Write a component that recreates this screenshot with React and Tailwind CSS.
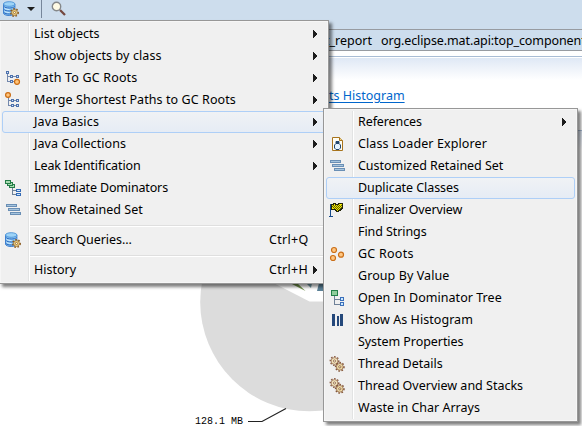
import React from 'react';

const FONT = "font-['Noto_Sans','Noto_Sans_CJK_SC',sans-serif]";

function Svg({ children, w = 16, h = 16, className = '', crisp = false }) {
  return (
    <svg
      width={w}
      height={h}
      viewBox={`0 0 ${w} ${h}`}
      shapeRendering={crisp ? 'crispEdges' : 'auto'}
      className={`block shrink-0 ${className}`}
    >
      {children}
    </svg>
  );
}

function GearRing({ cx, cy, r = 4, fill = '#f8dc8c', stroke = '#8a5a20' }) {
  return (
    <g>
      <circle cx={cx} cy={cy} r={r} fill="none" stroke={stroke} strokeWidth="1.5" strokeDasharray="1.6 1.54" />
      <circle cx={cx} cy={cy} r={r - 0.8} fill={fill} stroke={stroke} strokeWidth="0.7" />
      <circle cx={cx} cy={cy} r="1.1" fill="#fffbe8" stroke={stroke} strokeWidth="0.8" />
    </g>
  );
}

function DatabaseIcon() {
  return (
    <Svg>
      <path d="M0.5 3v9c0 1.5 2.6 2.5 5.700 2.500s5.700-1 5.700-2.500V3z" fill="#8cc6f2" stroke="#3f80cf" />
      <path d="M1 5.500c1.500 2 9 2 10.500 0M1 8.500c1.500 2 9 2 10.500 0M1 11.500c1.500 2 9 2 10.500 0" fill="none" stroke="#2a68c0" strokeWidth="1" />
      <path d="M1.500 7c1 1.200 3 1.500 5 1.500M1.500 10c1 1.200 3 1.500 5 1.500" fill="none" stroke="#d6efff" strokeWidth="0.900" />
      <ellipse cx="6.200" cy="3" rx="5.700" ry="2.300" fill="#9dd3f7" stroke="#4a92d6" strokeWidth="0.900" />
      <GearRing cx={11.5} cy={11.5} r={3.7} />
    </Svg>
  );
}

function PathIcon() {
  return (
    <Svg crisp>
      <path d="M2.500 3v8.500H6M2.500 6.500H5M8 6.500h3" fill="none" stroke="#7388ad" />
      <path d="M1.500 1.500h2v2h-2zM5.500 5.500h2v2h-2zM11.500 5.500h2v2h-2zM5.500 10.500h2v2h-2z" fill="#d5e3f5" stroke="#4e72ad" />
      <path d="M8 11.500h2" stroke="#7388ad" />
      <circle cx="12" cy="11.800" r="2.500" fill="#ffc57b" stroke="#cb6c13" strokeWidth="1.200" shapeRendering="auto" />
    </Svg>
  );
}

function MergeIcon() {
  return (
    <Svg crisp>
      <path d="M3.500 5v8.500H7M3.500 8.500H7M9 8.500h3M9 13.500h3" fill="none" stroke="#7388ad" />
      <path d="M6.500 7.500h2v2h-2zM11.500 7.500h2v2h-2zM6.500 12.500h2v2h-2zM11.500 12.500h2v2h-2z" fill="#d5e3f5" stroke="#4e72ad" />
      <circle cx="3" cy="3" r="2.400" fill="#ffc57b" stroke="#cb6c13" strokeWidth="1.200" shapeRendering="auto" />
    </Svg>
  );
}

function DominatorsIcon() {
  return (
    <Svg crisp>
      <g fill="#a9dcb2" stroke="#247d48">
        <path d="M4.500 4.500h5v3h-5z" />
        <path d="M2.500 2.500h5v3h-5z" />
        <path d="M0.500 0.500h5v3h-5z" />
      </g>
      <path d="M7.500 8v6.500H11M7.500 10.500H11" fill="none" stroke="#6f8198" />
      <path d="M11.500 9.500h4v2h-4zM11.500 13.500h4v2h-4z" fill="#cce7ff" stroke="#356bb6" />
    </Svg>
  );
}

function RetainedIcon() {
  return (
    <Svg crisp>
      <path d="M1.500 2.500h10v2h-10zM3.500 6.500h11v2h-11zM5.500 10.500h10v2h-10z" fill="#a5c4de" stroke="#6a8fb5" />
    </Svg>
  );
}

function LoaderIcon() {
  return (
    <Svg>
      <path d="M3.500 1.500h7l3 3v10h-10z" fill="#fffdf3" stroke="#a8741d" />
      <path d="M10.500 1.500v3h3" fill="#ecd28e" stroke="#a8741d" />
      <path d="M7 5.500h3v2l1.500 1.500v3L10 13.500H7L5.500 12V9L7 7.500z" fill="#e6f4ff" stroke="#23476f" />
      <path d="M7 5h3v3H7z" fill="#23476f" />
    </Svg>
  );
}

function FlagIcon() {
  return (
    <Svg crisp>
      <path d="M1.500 2v13M0 14.500h4" stroke="#16498b" fill="none" />
      <path d="M2.500 2.500h2v-1h2v1h3v-1h4v5h-1v1h-1v1h-2v1h-2v-1h-1v-1h-4z" fill="#f5eb00" stroke="#24250a" />
      <path
        d="M4 3h1v1H4zM6 3h1v1H6zM8 3h1v1H8zM10 3h1v1h-1zM12 3h1v1h-1zM3 4h1v1H3zM5 4h1v1H5zM7 4h1v1H7zM9 4h1v1H9zM11 4h1v1h-1zM4 5h1v1H4zM6 5h1v1H6zM8 5h1v1H8zM10 5h1v1h-1zM12 5h1v1h-1zM5 6h1v1H5zM7 6h1v1H7zM9 6h1v1H9zM11 6h1v1h-1zM8 7h1v1H8zM10 7h1v1h-1z"
        fill="#5c5a08"
      />
    </Svg>
  );
}

function RootsIcon() {
  return (
    <Svg>
      <g fill="#ffc681" stroke="#ca6e17" strokeWidth="1.200">
        <circle cx="5" cy="4" r="2.500" />
        <circle cx="4" cy="12" r="2.500" />
        <circle cx="12" cy="8.700" r="2.500" />
      </g>
    </Svg>
  );
}

function TreeIcon() {
  return (
    <Svg crisp>
      <path d="M5.500 6v8.500H11M5.500 9.500H11" fill="none" stroke="#6f8198" />
      <path d="M2.500 0.500h6v5h-6z" fill="#8fce9b" stroke="#23804a" />
      <path d="M11.500 7.500h3v3h-3zM11.500 12.500h3v3h-3z" fill="#c9e8ff" stroke="#3b6fba" />
    </Svg>
  );
}

function HistogramIcon() {
  return (
    <Svg crisp>
      <path d="M3 2h3v12H3zM8 4h2v10H8zM11 2h3v12h-3z" fill="#25487b" />
    </Svg>
  );
}

function ThreadsIcon() {
  return (
    <Svg>
      <GearRing cx={5.5} cy={5} r={4.2} fill="#f0e2ba" stroke="#8c6047" />
      <GearRing cx={10.8} cy={10.8} r={4.2} fill="#ecd9a5" stroke="#855739" />
    </Svg>
  );
}

function Arrow() {
  return (
    <Svg w={4} h={8} crisp>
      <path d="M0 0l4 4-4 4z" fill="#1c1c1c" />
    </Svg>
  );
}

function MenuItem({ label, icon, shortcut, arrow, selected, spacing = '' }) {
  return (
    <div
      className={`flex h-[22px] items-center rounded-[3px] border ${
        selected ? 'border-[#aecff7] bg-linear-to-b from-[#f0f2f5] to-[#e6ecf5]' : 'border-transparent'
      }`}
    >
      <div className="flex w-[31px] shrink-0 pl-[2px]">{icon}</div>
      <span className={`grow whitespace-pre ${spacing}`}>{label}</span>
      {shortcut && (
        <span className={`w-[44px] tracking-[0.3px] whitespace-pre ${arrow ? '' : 'mr-[12px]'}`}>{shortcut}</span>
      )}
      {arrow && <div className="mr-[8px]"><Arrow /></div>}
    </div>
  );
}

function Separator() {
  return <div className="mt-[4px] mb-[2px] ml-[28px] h-[2px] border-t border-b border-t-[#dfdfdf] border-b-white" />;
}

function Menu({ className, children }) {
  return (
    <div className={`absolute border border-[#979797] bg-[#f0f0f0] p-px shadow-[3px_3px_3px_rgba(0,0,0,0.5)] ${className}`}>
      <div className="relative h-full p-px outline-1 outline-[#f6f6f6]">
        <div className="absolute top-px bottom-px left-[27px] w-[2px] border-r border-l border-r-white border-l-[#e2e3e3]" />
        <div className="relative">{children}</div>
      </div>
    </div>
  );
}

const mainItems = [
  { label: 'List objects', arrow: true },
  { label: 'Show objects by class', arrow: true, spacing: 'tracking-[0.1px]' },
  { label: 'Path To GC Roots', arrow: true, icon: <PathIcon />, spacing: 'tracking-[0.18px]' },
  { label: 'Merge Shortest Paths to GC Roots', arrow: true, icon: <MergeIcon />, spacing: 'tracking-[0.09px]' },
  { label: 'Java Basics', arrow: true, selected: true, spacing: 'tracking-[0.15px]' },
  { label: 'Java Collections', arrow: true, spacing: 'tracking-[0.06px]' },
  { label: 'Leak Identification', arrow: true, spacing: 'tracking-[-0.1px]' },
  { label: 'Immediate Dominators', icon: <DominatorsIcon />, spacing: 'tracking-[-0.15px]' },
  { label: 'Show Retained Set', icon: <RetainedIcon /> },
];

const basicsItems = [
  { label: 'References', arrow: true, spacing: 'tracking-[-0.1px]' },
  { label: 'Class Loader Explorer', icon: <LoaderIcon />, spacing: 'tracking-[0.1px]' },
  { label: 'Customized Retained Set', icon: <RetainedIcon />, spacing: 'tracking-[-0.04px]' },
  { label: 'Duplicate Classes', selected: true, spacing: 'tracking-[-0.06px]' },
  { label: 'Finalizer Overview', icon: <FlagIcon />, spacing: 'tracking-[-0.15px]' },
  { label: 'Find Strings', spacing: 'tracking-[-0.08px]' },
  { label: 'GC Roots', icon: <RootsIcon />, spacing: 'tracking-[0.25px]' },
  { label: 'Group By Value', spacing: 'tracking-[0.08px]' },
  { label: 'Open In Dominator Tree', icon: <TreeIcon />, spacing: 'tracking-[0.04px]' },
  { label: 'Show As Histogram', icon: <HistogramIcon />, spacing: 'tracking-[0.05px]' },
  { label: 'System Properties', spacing: 'tracking-[-0.06px]' },
  { label: 'Thread Details', icon: <ThreadsIcon /> },
  { label: 'Thread Overview and Stacks', icon: <ThreadsIcon /> },
  { label: 'Waste in Char Arrays' },
];

function PieChart() {
  return (
    <svg width="582" height="313" viewBox="0 113 582 313" className="block">
      <circle cx="309.500" cy="302" r="109.300" fill="#dcdcdc" />
      <path d="M309.500 301.500L180 235V150H450V301.500z" fill="#fff" />
      <path d="M290 283h7l8.500 8z" fill="#6f8f49" />
      <path d="M306 283h6l-1 5z" fill="#6d96a2" />
      <path d="M319 283h8v8h-10z" fill="#5b8197" />
      <path d="M248 421.500h14l24-13" fill="none" stroke="#222" strokeWidth="1.200" />
    </svg>
  );
}

export default function App() {
  return (
    <div className={`relative h-[426px] w-[582px] overflow-hidden bg-white text-[12.5px] leading-[20px] text-black ${FONT}`}>
      <div className="flex h-[29px] items-start bg-[#cddded]">
        <div className="mt-[1px] ml-[3px]"><DatabaseIcon /></div>
        <Svg w={8} h={4} className="mt-[7px] ml-[8px]"><path d="M0 0h8L4 4z" fill="#1d1d1d" /></Svg>
        <div className="ml-[6px] h-[18px] w-px bg-[#76869a]" />
        <Svg className="mt-[1px] ml-[9px]">
          <path d="M9 9l5 5" stroke="#75483f" strokeWidth="2.300" />
          <circle cx="5.500" cy="5.500" r="4.200" fill="#fffbe5" stroke="#85888a" strokeWidth="1.400" />
        </Svg>
      </div>
      <div className="flex h-[22px] items-center border-y border-[#979ba1] bg-[#cddded] pt-px pl-[325px]">
        <span className="w-[56px] shrink-0 whitespace-pre">t_report</span>
        <span className="shrink-0 tracking-[-0.1px] whitespace-pre">org.eclipse.mat.api:top_component</span>
      </div>
      <div className="h-[7px] pt-[5px]"><div className="h-px bg-[#a9bdd5]" /></div>
      <div className="h-[55px] bg-linear-to-b from-[#dfe8f5] to-white to-40% pt-[28px] pl-[329px]">
        <span className="whitespace-pre text-[#0066cc] underline underline-offset-2">ts Histogram</span>
      </div>
      <div className="relative h-[313px]">
        <PieChart />
        <span className="absolute top-[299px] left-[195px] font-['Liberation_Mono',monospace] text-[10px] whitespace-pre">128.1 MB</span>
        <div className="absolute top-[17px] right-0 h-[20px] w-[8px] border-t border-[#a9bdd5] bg-linear-to-b from-[#dfe8f5] to-white" />
      </div>

      <Menu className="top-[20px] left-[-1px] h-[264px] w-[330px]">
        {mainItems.map((item) => <MenuItem key={item.label} {...item} />)}
        <Separator />
        <MenuItem label="Search Queries..." shortcut="Ctrl+Q" icon={<DatabaseIcon />} spacing="tracking-[-0.06px]" />
        <Separator />
        <MenuItem label="History" shortcut="Ctrl+H" arrow />
      </Menu>
      <Menu className="top-[108px] left-[323px] h-[314px] w-[255px]">
        {basicsItems.map((item) => <MenuItem key={item.label} {...item} />)}
      </Menu>
    </div>
  );
}
